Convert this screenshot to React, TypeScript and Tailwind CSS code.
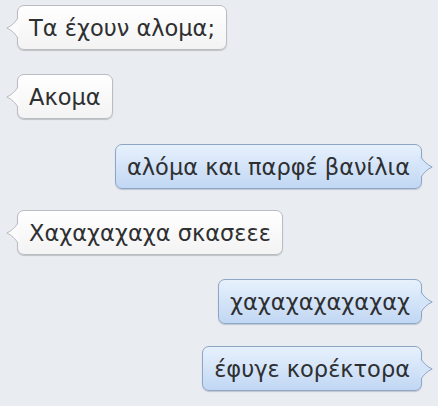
import React from "react";

type Msg = {
  id: number;
  text: string;
  mine: boolean;
  mt: string;
};

const messages: Msg[] = [
  { id: 1, text: "Τα έχουν αλομα;", mine: false, mt: "mt-[5px]" },
  { id: 2, text: "Ακομα", mine: false, mt: "mt-[24px]" },
  { id: 3, text: "αλόμα και παρφέ βανίλια", mine: true, mt: "mt-[25px]" },
  { id: 4, text: "Χαχαχαχαχα σκασεεε", mine: false, mt: "mt-[21px]" },
  { id: 5, text: "χαχαχαχαχαχαχ", mine: true, mt: "mt-[24px]" },
  { id: 6, text: "έφυγε κορέκτορα", mine: true, mt: "mt-[22px]" },
];

function Tail({ mine }: { mine: boolean }) {
  const fill = mine ? "#d4e5f9" : "#fbfbfb";
  const stroke = mine ? "#8ea6c6" : "#b9bcc0";
  return (
    <svg
      width="13"
      height="20"
      viewBox="0 0 13 20"
      className={
        mine
          ? "absolute top-1/2 -translate-y-1/2 right-[-12px] -scale-x-100"
          : "absolute top-1/2 -translate-y-1/2 left-[-12px]"
      }
    >
      <path
        d="M13,0 L12,0 C9.5,4 5.5,8 0.8,10 C5.5,12 9.5,16 12,20 L13,20 Z"
        fill={fill}
      />
      <path
        d="M12,0 C9.5,4 5.5,8 0.8,10 C5.5,12 9.5,16 12,20"
        fill="none"
        stroke={stroke}
        strokeWidth="1"
      />
    </svg>
  );
}

function Bubble({ msg }: { msg: Msg }) {
  return (
    <div
      className={`relative h-[45px] flex items-center px-[11px] rounded-[7px] border text-[22.5px] text-[#2e2f31] leading-none ${msg.mt} ${
        msg.mine
          ? "self-end border-[#8ea6c6] bg-gradient-to-b from-[#e7f1fd] to-[#c1d7f3] shadow-[0_1px_1px_rgba(60,80,110,0.25)]"
          : "self-start border-[#b9bcc0] bg-gradient-to-b from-[#ffffff] to-[#f3f3f3] shadow-[0_1px_1px_rgba(0,0,0,0.18)]"
      }`}
    >
      <Tail mine={msg.mine} />
      <span className="relative top-[1px]">{msg.text}</span>
    </div>
  );
}

export default function App() {
  return (
    <div
      className="w-[438px] h-[406px] bg-[#e9ecf0] flex flex-col pl-[17px] pr-[16px] overflow-hidden"
      style={{ fontFamily: '"DejaVu Sans", "Liberation Sans", sans-serif' }}
    >
      {messages.map((m) => (
        <Bubble key={m.id} msg={m} />
      ))}
    </div>
  );
}
